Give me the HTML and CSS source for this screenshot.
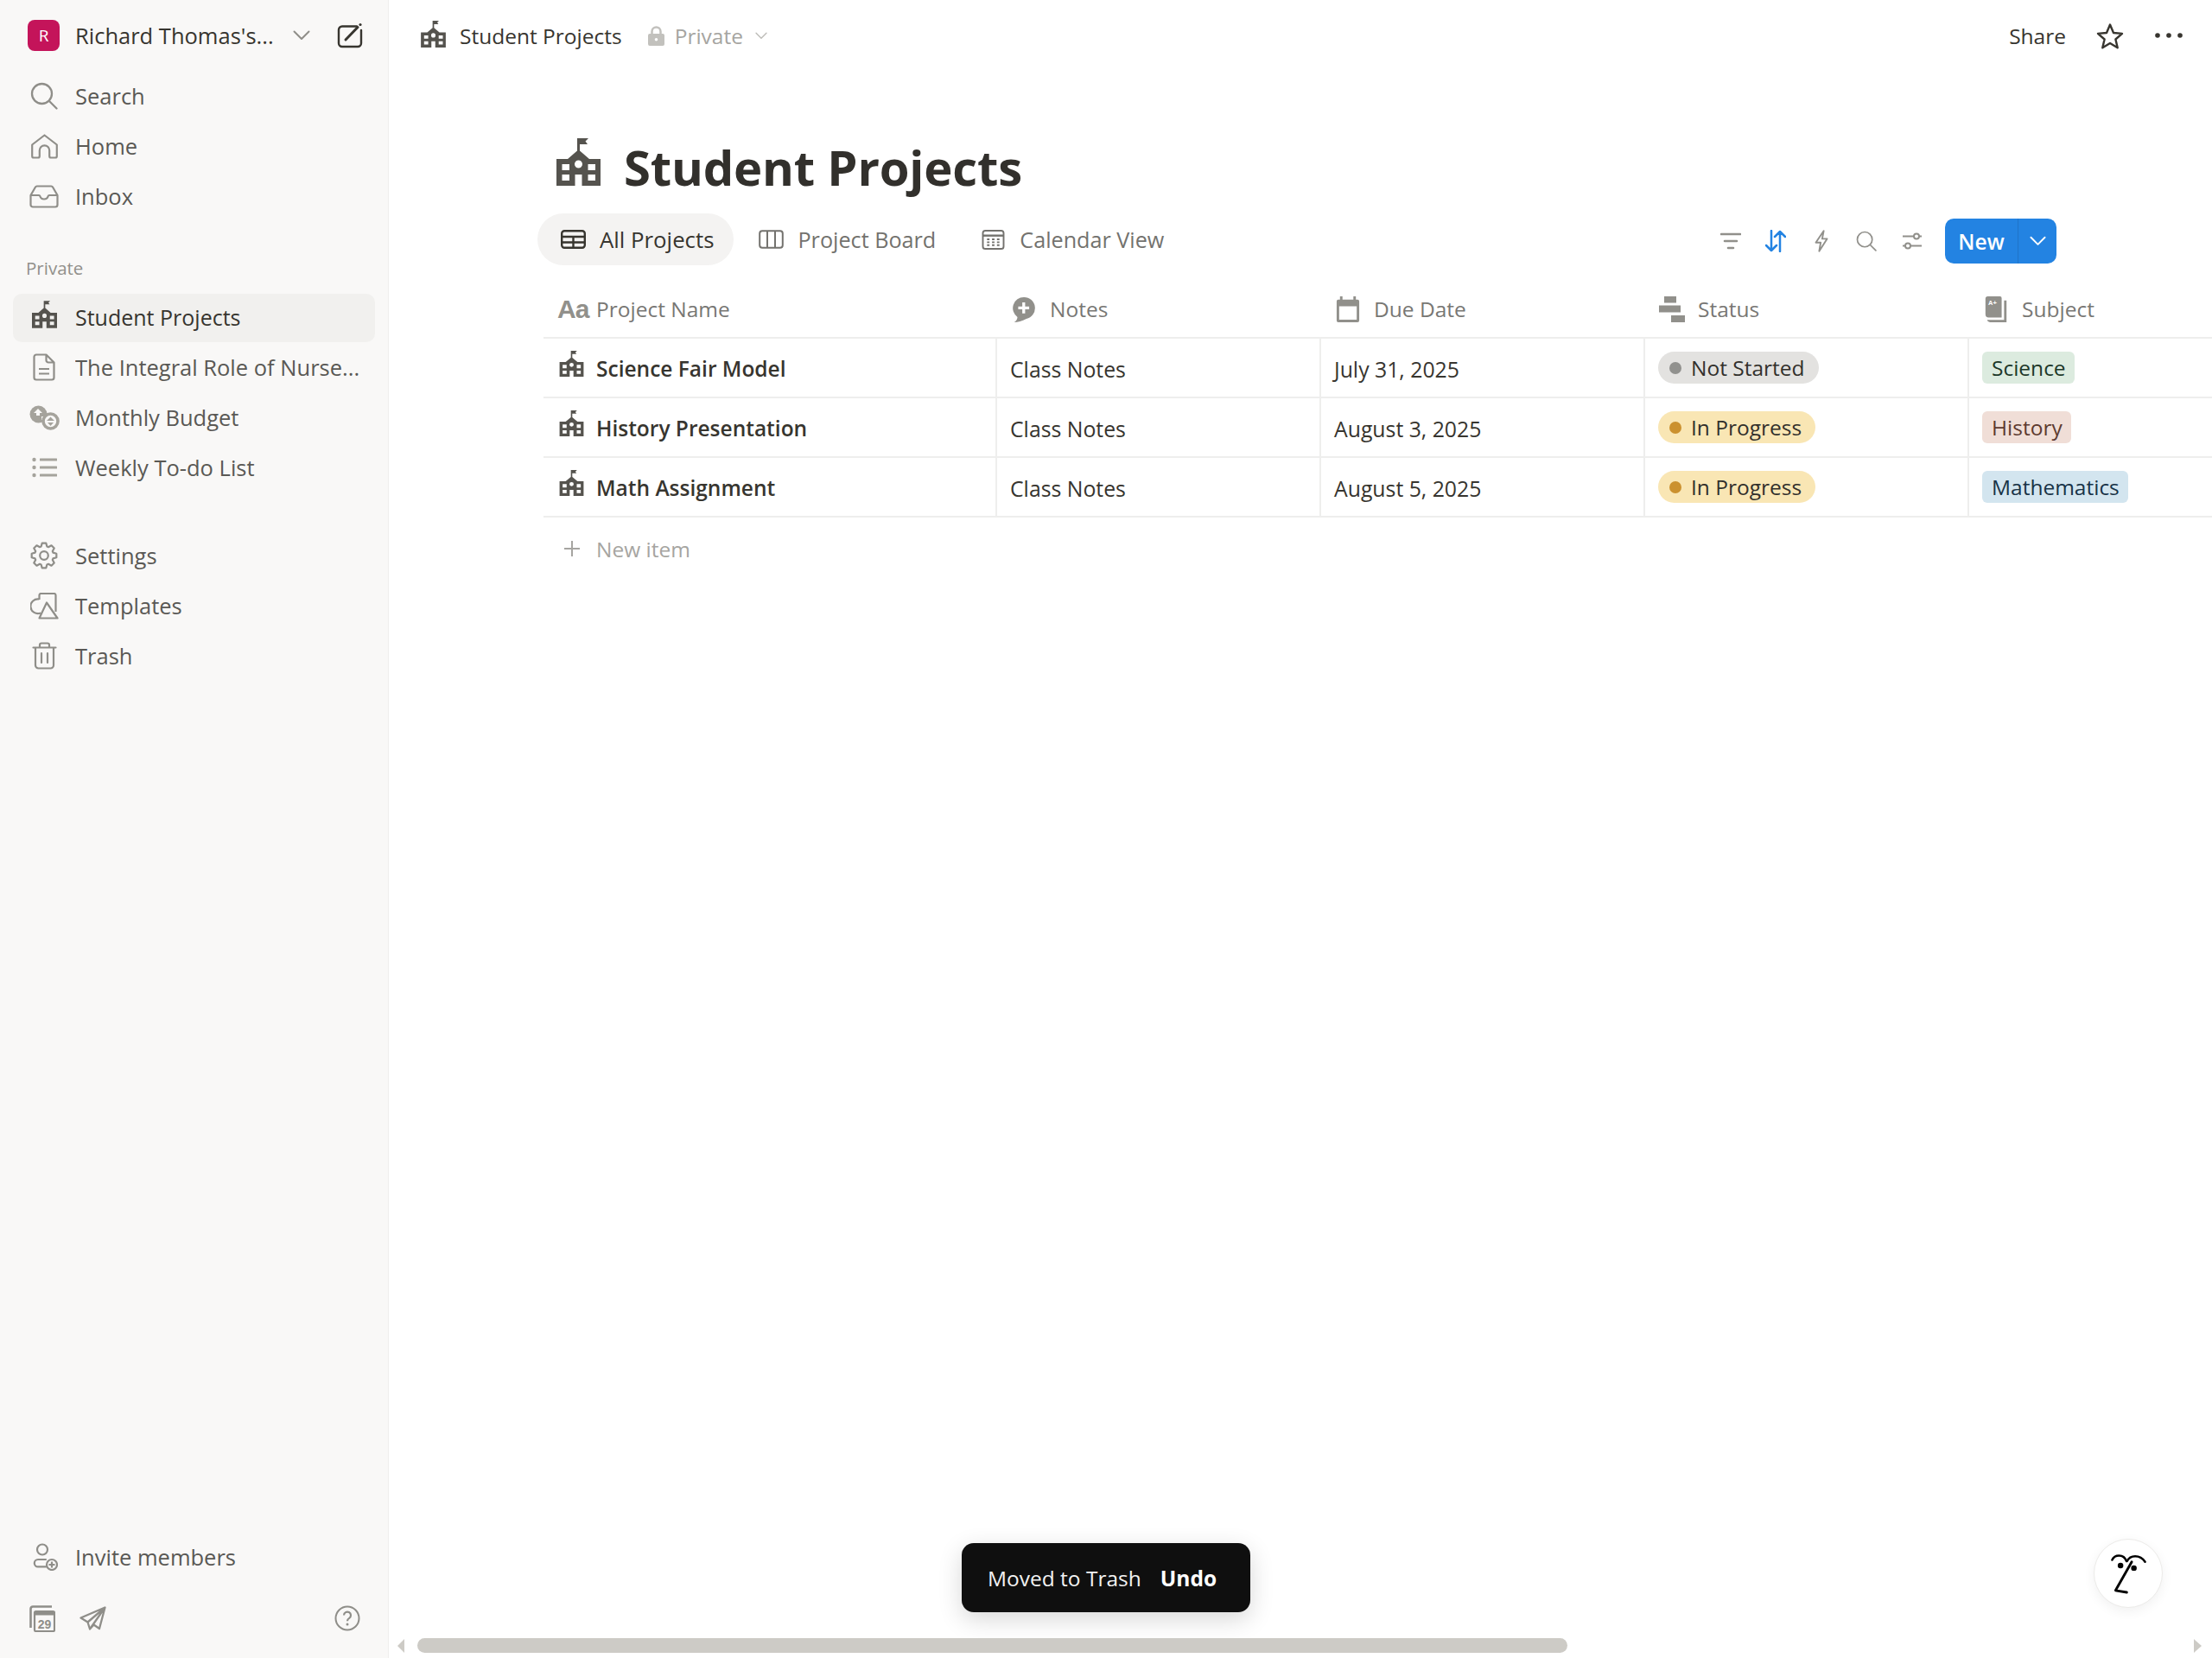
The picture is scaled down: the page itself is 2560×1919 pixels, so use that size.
FILE: index.html
```html
<!DOCTYPE html>
<html lang="en">
<head>
<meta charset="utf-8">
<title>Student Projects</title>
<link rel="stylesheet" href="styles.css">
</head>
<body>
<svg class="defs" aria-hidden="true">
  <symbol id="school" viewBox="0 0 51 55">
    <path fill="currentColor" fill-rule="evenodd" d="M24 0h13l-3.500 3.500L36 7H27v7.500L38 24h13v31H29.500V42H21.500V55H0V24h13L24 14.500zM6.500 30v7H15v-7zM6.500 42v7H15v-7zM36.500 30v7H45v-7zM36.500 42v7H45v-7zM25.500 25.500a4.500 4.500 0 1 0 0 9 4.500 4.500 0 0 0 0-9z"/>
  </symbol>
  <symbol id="search" viewBox="0 0 32 32">
    <circle cx="13.500" cy="13.500" r="11.500" fill="none" stroke="currentColor" stroke-width="2.300"/>
    <path d="M22 22l8.500 8.500" fill="none" stroke="currentColor" stroke-width="2.300" stroke-linecap="round"/>
  </symbol>
  <symbol id="chev" viewBox="0 0 20 12">
    <path d="M1.500 1.500L10 10l8.500-8.500" fill="none" stroke="currentColor" stroke-width="2" stroke-linecap="round" stroke-linejoin="round"/>
  </symbol>
</svg>
<div class="app">
  <aside class="sidebar">
    <div class="workspace">
      <span class="avatar">R</span>
      <span class="ws-name">Richard Thomas's...</span>
      <svg class="ws-chev"><use href="#chev"/></svg>
      <svg class="compose" viewBox="0 0 30 30"><path d="M23 4.500H6a4 4 0 0 0-4 4V24a4 4 0 0 0 4 4h18a4 4 0 0 0 4-4V9" fill="none" stroke="currentColor" stroke-width="2.400" stroke-linecap="round"/><path d="M10 20L24 5.500" stroke="currentColor" stroke-width="3" stroke-linecap="round"/><circle cx="27" cy="2.500" r="1.600" fill="currentColor"/></svg>
    </div>
    <nav class="group">
      <a class="item"><span class="ibox"><svg class="i31"><use href="#search"/></svg></span>Search</a>
      <a class="item"><span class="ibox"><svg class="ihome" viewBox="0 0 31 29"><path d="M3 27.500a1.800 1.800 0 0 1-1.800-1.800V12.500L15.500 1.500 29.800 12.500v13.200a1.800 1.800 0 0 1-1.800 1.800h-5a1.800 1.800 0 0 1-1.800-1.800V19a5.700 5.700 0 0 0-11.400 0v6.700A1.800 1.800 0 0 1 8 27.500z" fill="none" stroke="currentColor" stroke-width="2.200" stroke-linejoin="round"/></svg></span>Home</a>
      <a class="item"><span class="ibox"><svg class="iinbox" viewBox="0 0 34 27"><path d="M1.500 12L7 2.500a2 2 0 0 1 1.700-1h16.600a2 2 0 0 1 1.700 1L32.500 12v11a2.500 2.500 0 0 1-2.500 2.500H4A2.500 2.500 0 0 1 1.500 23zM1.500 12H11q1 0 1.300 1 1 3.500 4.700 3.500t4.700-3.500q.3-1 1.300-1h9.500" fill="none" stroke="currentColor" stroke-width="2.200" stroke-linejoin="round"/></svg></span>Inbox</a>
    </nav>
    <div class="section-label">Private</div>
    <nav class="group">
      <a class="item active"><span class="ibox"><svg class="school-side"><use href="#school"/></svg></span>Student Projects</a>
      <a class="item"><span class="ibox"><svg class="idoc" viewBox="0 0 26 32"><path d="M15.500 1.500H4A2.500 2.500 0 0 0 1.500 4v24A2.500 2.500 0 0 0 4 30.500h18a2.500 2.500 0 0 0 2.500-2.500V10.500zM15.500 1.500V8a2.500 2.500 0 0 0 2.500 2.500h6.500M7 18h12M7 23.500h12" fill="none" stroke="currentColor" stroke-width="2.200" stroke-linejoin="round"/></svg></span><span class="ellip">The Integral Role of Nurse...</span></a>
      <a class="item"><span class="ibox"><svg class="icoins" viewBox="0 0 35 29"><circle cx="10.500" cy="10.500" r="10" fill="currentColor"/><path d="M10 4l5 5h-3v3H8V9H5zM17 13h-3v4h3z" fill="#f9f8f7"/><circle cx="24.500" cy="18.500" r="8.500" fill="#f9f8f7" stroke="currentColor" stroke-width="3.600"/><path d="M24.500 13.500l4.500 4.500h-9zM24.500 24l-3.500-4h7z" fill="currentColor"/></svg></span>Monthly Budget</a>
      <a class="item"><span class="ibox"><svg class="ilist" viewBox="0 0 29 24"><g fill="currentColor"><circle cx="2.500" cy="3" r="2.200"/><circle cx="2.500" cy="12" r="2.200"/><circle cx="2.500" cy="21" r="2.200"/><rect x="9" y="1.500" width="20" height="3" rx=".5"/><rect x="9" y="10.500" width="20" height="3" rx=".5"/><rect x="9" y="19.500" width="20" height="3" rx=".5"/></g></svg></span>Weekly To-do List</a>
    </nav>
    <nav class="group group-settings">
      <a class="item"><span class="ibox"><svg class="i31" viewBox="0 0 32 32"><circle cx="16" cy="16" r="4.800" fill="none" stroke="currentColor" stroke-width="2.200"/><path d="M12.600 5.540L13.730 1.680H18.270L19.400 5.540L20.990 6.200L24.520 4.270L27.730 7.480L25.800 11.010L26.460 12.600L30.320 13.730V18.270L26.460 19.400L25.800 20.990L27.730 24.520L24.520 27.730L20.990 25.800L19.400 26.460L18.270 30.320H13.730L12.600 26.460L11.010 25.800L7.480 27.730L4.270 24.520L6.200 20.990L5.540 19.400L1.680 18.270V13.730L5.540 12.600L6.200 11.010L4.270 7.480L7.480 4.270L11.010 6.200z" fill="none" stroke="currentColor" stroke-width="2.200" stroke-linejoin="round"/></svg></span>Settings</a>
      <a class="item"><span class="ibox"><svg class="itempl" viewBox="0 0 33 31"><path d="M10.500 8V3a2 2 0 0 1 2-2h15a2 2 0 0 1 2 2v19" fill="none" stroke="currentColor" stroke-width="2.200"/><path d="M10.500 7.500A8.400 8.400 0 1 0 12 23.500" fill="none" stroke="currentColor" stroke-width="2.200"/><path d="M19 11.500L31.500 29.500H10.500z" fill="none" stroke="currentColor" stroke-width="2.200" stroke-linejoin="round"/></svg></span>Templates</a>
      <a class="item"><span class="ibox"><svg class="itrash" viewBox="0 0 29 32"><path d="M1.500 6.500h26M9 6V3.500a2 2 0 0 1 2-2h7a2 2 0 0 1 2 2V6M4 6.500V27a3.500 3.500 0 0 0 3.500 3.500h14A3.500 3.500 0 0 0 25 27V6.500M11 13v11M18 13v11" fill="none" stroke="currentColor" stroke-width="2.200" stroke-linecap="round"/></svg></span>Trash</a>
    </nav>
    <div class="side-bottom">
      <a class="item"><span class="ibox"><svg class="iinvite" viewBox="0 0 31 32"><circle cx="13" cy="7.500" r="6" fill="none" stroke="currentColor" stroke-width="2.200"/><path d="M17 19H8a4.200 4.200 0 0 0 0 8.400h9" fill="none" stroke="currentColor" stroke-width="2.200" stroke-linecap="round"/><circle cx="24" cy="25" r="6" fill="none" stroke="currentColor" stroke-width="2.200"/><path d="M24 21.500v7M20.500 25h7" stroke="currentColor" stroke-width="2.200"/></svg></span>Invite members</a>
      <div class="tools">
        <svg class="icalstack" viewBox="0 0 30 31"><path d="M1.500 26V4a2.500 2.500 0 0 1 2.500-2.500h22" fill="none" stroke="currentColor" stroke-width="2.600"/><rect x="6" y="7" width="23" height="23" rx="1.500" fill="none" stroke="currentColor" stroke-width="2.200"/><rect x="6" y="7" width="23" height="4.500" fill="currentColor"/><text class="cal-num" x="17.500" y="26.500">29</text></svg>
        <svg class="iplane" viewBox="0 0 31 28"><path d="M29.500 1.500L1.500 13.500l8 5 2.500 8 4.500-5 6.500 4.500zM29.500 1.500L9.500 18.500M29.500 1.500L12 26.500" fill="none" stroke="currentColor" stroke-width="2.300" stroke-linejoin="round"/></svg>
        <svg class="ihelp" viewBox="0 0 30 30"><circle cx="15" cy="15" r="13.500" fill="none" stroke="currentColor" stroke-width="2"/><path d="M11 11.500a4 4 0 1 1 6.200 3.400c-1.500.9-2.200 1.800-2.200 3.300" fill="none" stroke="currentColor" stroke-width="2.200"/><circle cx="15" cy="22" r="1.500" fill="currentColor"/></svg>
      </div>
    </div>
  </aside>

  <main class="main">
    <header class="topbar">
      <div class="crumb">
        <svg class="school-crumb"><use href="#school"/></svg>
        <span class="crumb-title">Student Projects</span>
        <svg class="lock" viewBox="0 0 19 23"><path d="M4.500 10V6.500a5 5 0 0 1 10 0V10" fill="none" stroke="currentColor" stroke-width="2.500"/><path fill-rule="evenodd" fill="currentColor" d="M2 9h15a2 2 0 0 1 2 2v10a2 2 0 0 1-2 2H2a2 2 0 0 1-2-2V11a2 2 0 0 1 2-2zM9.500 14a1.800 1.800 0 1 0 0 3.600 1.800 1.800 0 0 0 0-3.600z"/></svg>
        <span class="crumb-private">Private</span>
        <svg class="crumb-chev"><use href="#chev"/></svg>
      </div>
      <div class="top-actions">
        <span class="share">Share</span>
        <svg class="star" viewBox="0 0 32 31"><path d="M16 2.500l4 9.500 10 .9-7.600 6.600 2.300 9.800L16 23.900l-8.700 5.400 2.300-9.800L2 12.900l10-.9z" fill="none" stroke="currentColor" stroke-width="2.400" stroke-linejoin="round"/></svg>
        <svg class="dots" viewBox="0 0 32 6"><circle cx="3" cy="3" r="2.800" fill="currentColor"/><circle cx="16" cy="3" r="2.800" fill="currentColor"/><circle cx="29" cy="3" r="2.800" fill="currentColor"/></svg>
      </div>
    </header>

    <section class="content">
      <div class="title-row">
        <svg class="school-title"><use href="#school"/></svg>
        <h1 class="title">Student Projects</h1>
      </div>
      <div class="view-row">
        <div class="tabs">
          <a class="tab tab-on"><svg class="tab-ic" viewBox="0 0 29 22"><rect x="1.200" y="1.200" width="26.600" height="19.600" rx="3" fill="none" stroke="currentColor" stroke-width="2.400"/><path d="M1 8h27M1 14.500h27M14.500 8v13" stroke="currentColor" stroke-width="2.400"/></svg>All Projects</a>
          <a class="tab"><svg class="tab-ic" viewBox="0 0 29 22"><rect x="1.200" y="1.200" width="26.600" height="19.600" rx="3" fill="none" stroke="currentColor" stroke-width="2"/><path d="M10 1v20M19 1v20" stroke="currentColor" stroke-width="2"/></svg>Project Board</a>
          <a class="tab"><svg class="tab-ic" viewBox="0 0 27 25"><rect x="1" y="2" width="25" height="22" rx="3" fill="none" stroke="currentColor" stroke-width="2"/><path d="M1 8h25" stroke="currentColor" stroke-width="2.500"/><path d="M6 12.500h15M6 16h15M6 19.500h15" stroke="currentColor" stroke-width="2" stroke-dasharray="3 3"/></svg>Calendar View</a>
        </div>
        <div class="toolbar">
          <span class="tool"><svg class="t24" viewBox="0 0 24 22"><path d="M1 3h22M5 11h14M9 19h6" stroke="currentColor" stroke-width="2.600" stroke-linecap="round"/></svg></span>
          <span class="tool tool-blue"><svg class="t24" viewBox="0 0 24 26"><path d="M7 1v23M1 18l6 6 6-6M17 25V2M11 8l6-6 6 6" fill="none" stroke="currentColor" stroke-width="2.500" stroke-linecap="round" stroke-linejoin="round"/></svg></span>
          <span class="tool"><svg class="t24" viewBox="0 0 18 30"><path d="M12 1.500L1.500 17H8l-2 11.500L16.500 12H10z" fill="none" stroke="currentColor" stroke-width="2.200" stroke-linejoin="round"/></svg></span>
          <span class="tool"><svg class="t24"><use href="#search"/></svg></span>
          <span class="tool"><svg class="t24" viewBox="0 0 24 22"><path d="M1 5.500h13M20 5.500h3M1 16.500h3M10 16.500h13" stroke="currentColor" stroke-width="2"/><circle cx="17" cy="5.500" r="3" fill="none" stroke="currentColor" stroke-width="2"/><circle cx="7" cy="16.500" r="3" fill="none" stroke="currentColor" stroke-width="2"/></svg></span>
          <div class="new-btn"><span class="new-label">New</span><span class="new-arrow"><svg class="new-chev"><use href="#chev"/></svg></span></div>
        </div>
      </div>

      <div class="table">
        <div class="cell head"><span class="th-aa">Aa</span>Project Name</div>
        <div class="cell head"><svg class="th-ic" viewBox="0 0 28 32"><path fill="currentColor" fill-rule="evenodd" d="M14 1a13.500 13.500 0 0 1 3 26.700Q9 32 2 32q4-3 4-6.500A13.500 13.500 0 0 1 14 1zM12 7.500v5h-5v3.500h5v5h3.500v-5h5v-3.500h-5v-5z"/></svg>Notes</div>
        <div class="cell head"><svg class="th-ic" viewBox="0 0 27 31"><path fill="currentColor" fill-rule="evenodd" d="M4 0h3v4h13V0h3v4h2a2 2 0 0 1 2 2v23a2 2 0 0 1-2 2H2a2 2 0 0 1-2-2V6a2 2 0 0 1 2-2h2zM3 12v16h21V12z"/></svg>Due Date</div>
        <div class="cell head"><svg class="th-ic" viewBox="0 0 30 30"><g fill="currentColor"><rect x="6" y="0" width="14" height="7.500"/><rect x="0" y="10.500" width="25" height="8"/><rect x="14" y="22" width="16" height="8"/></g></svg>Status</div>
        <div class="cell head"><svg class="th-ic" viewBox="0 0 26 32"><path fill="currentColor" d="M3 0h15a2 2 0 0 1 2 2v24H4a4 4 0 0 1-4-4V3a3 3 0 0 1 3-3z"/><path fill="currentColor" d="M23 5h3v27H6a4 4 0 0 1-4-3h21z"/><text class="aplus" x="3.500" y="11">A+</text></svg>Subject</div>

        <div class="cell name"><svg class="school-row"><use href="#school"/></svg>Science Fair Model</div>
        <div class="cell text">Class Notes</div>
        <div class="cell text">July 31, 2025</div>
        <div class="cell tag-cell"><span class="pill pill-grey"><i class="dot dot-grey"></i>Not Started</span></div>
        <div class="cell tag-cell"><span class="tag tag-green">Science</span></div>

        <div class="cell name"><svg class="school-row"><use href="#school"/></svg>History Presentation</div>
        <div class="cell text">Class Notes</div>
        <div class="cell text">August 3, 2025</div>
        <div class="cell tag-cell"><span class="pill pill-yellow"><i class="dot dot-yellow"></i>In Progress</span></div>
        <div class="cell tag-cell"><span class="tag tag-red">History</span></div>

        <div class="cell name"><svg class="school-row"><use href="#school"/></svg>Math Assignment</div>
        <div class="cell text">Class Notes</div>
        <div class="cell text">August 5, 2025</div>
        <div class="cell tag-cell"><span class="pill pill-yellow"><i class="dot dot-yellow"></i>In Progress</span></div>
        <div class="cell tag-cell"><span class="tag tag-blue">Mathematics</span></div>
      </div>

      <div class="new-item"><svg class="plus" viewBox="0 0 20 20"><path d="M10 1v18M1 10h18" stroke="currentColor" stroke-width="2"/></svg>New item</div>
    </section>

    <div class="toast"><span>Moved to Trash</span><b class="undo">Undo</b></div>
    <div class="face"><svg class="face-svg" viewBox="250 170 130 150"><path d="M262 202q6-14 22-14 18 0 24 18M310 206q8-16 26-16 20 0 32 18" fill="none" stroke="#000" stroke-width="7" stroke-linecap="round"/><path d="M325 208l-52 92 36 6" fill="none" stroke="#000" stroke-width="8" stroke-linecap="round" stroke-linejoin="round"/><circle cx="289" cy="220" r="9"/><circle cx="332" cy="228" r="9"/></svg></div>
    <div class="scroll-arrow scroll-left"></div>
    <div class="scroll-thumb"></div>
    <div class="scroll-arrow scroll-right"></div>
  </main>
</div>
</body>
</html>
```
FILE: styles.css
```css
* { box-sizing: border-box; }
html, body { margin: 0; height: 100%; }
body {
  font-family: "Open Sans", "Noto Sans", sans-serif;
  font-size: 24.5px;
  color: #37352f;
  background: #fff;
  overflow: hidden;
}
.defs { position: absolute; width: 0; height: 0; }
.app { display: flex; height: 1919px; }

/* Sidebar */
.sidebar {
  width: 450px;
  flex: none;
  display: flex;
  flex-direction: column;
  background: #f9f8f7;
  border-right: 1px solid #f0efed;
  color: #5a5955;
  font-size: 25.5px;
  font-weight: 500;
}
.workspace {
  height: 83px;
  display: flex;
  align-items: center;
  padding-left: 32px;
  padding-bottom: 1px;
  color: #37352f;
}
.avatar {
  width: 37px;
  height: 36px;
  border-radius: 8px;
  background: #c4145a;
  color: #fff;
  font-size: 19px;
  font-weight: 400;
  display: flex;
  align-items: center;
  justify-content: center;
  margin-right: 18px;
}
.ws-name { width: 252px; white-space: nowrap; }
.ws-chev { width: 20px; height: 12px; color: #8f8e89; margin-right: 31px; }
.compose { width: 30px; height: 30px; color: #37352f; }
.group { display: flex; flex-direction: column; }
.group-settings { margin-top: 44px; }
.item {
  height: 56px;
  margin: 1px 15px;
  padding: 0 0 2px 16px;
  display: flex;
  align-items: center;
  border-radius: 10px;
  white-space: nowrap;
}
.item.active { background: #f1f0ee; color: #37352f; font-size: 25px; }
.ibox {
  width: 40px;
  margin-right: 16px;
  flex: none;
  display: flex;
  justify-content: center;
  color: #8f8e89;
}
.item.active .ibox { color: #55534e; }
.ellip { overflow: hidden; }
.i31 { width: 32px; height: 32px; }
.ihome { width: 31px; height: 29px; }
.iinbox { width: 34px; height: 27px; }
.school-side { width: 29px; height: 34px; margin-top: -6px; }
.idoc { width: 26px; height: 32px; }
.icoins { width: 35px; height: 29px; color: #a5a39c; }
.ilist { width: 29px; height: 24px; color: #a5a39c; }
.itempl { width: 33px; height: 31px; }
.itrash { width: 29px; height: 32px; }
.iinvite { width: 31px; height: 32px; }
.section-label {
  height: 82px;
  padding: 39px 0 0 30px;
  font-size: 20.500px;
  font-weight: 500;
  color: #91908b;
  line-height: 28px;
}
.side-bottom {
  margin-top: auto;
  padding-bottom: 17px;
}
.tools {
  height: 58px;
  margin-top: 13px;
  padding: 0 32px 0 34px;
  display: flex;
  align-items: center;
  color: #8f8e89;
}
.icalstack { width: 30px; height: 31px; }
.cal-num { font-size: 14px; font-weight: 700; text-anchor: middle; fill: currentColor; font-family: "Liberation Sans", sans-serif; }
.iplane { width: 31px; height: 28px; margin-left: 28px; }
.ihelp { width: 30px; height: 30px; margin-left: auto; }

/* Main */
.main { flex: 1; position: relative; min-width: 0; display: flex; flex-direction: column; }
.topbar {
  height: 82px;
  flex: none;
  display: flex;
  align-items: center;
  justify-content: space-between;
  padding: 0 34px 0 37px;
}
.crumb { display: flex; align-items: center; }
.school-crumb { width: 29px; height: 31px; color: #55534e; margin-right: 16px; margin-top: -4px; }
.crumb-title { margin-right: 30px; }
.lock { width: 19px; height: 23px; color: #c2c1bd; margin-right: 12px; }
.crumb-private { color: #a6a5a1; margin-right: 14px; }
.crumb-chev { width: 14px; height: 9px; color: #bdbcb8; }
.top-actions { display: flex; align-items: center; }
.share { margin-right: 35px; }
.star { width: 32px; height: 31px; color: #37352f; margin-right: 36px; }
.dots { width: 32px; height: 6px; color: #37352f; }

.content { padding-left: 172px; }
.title-row {
  height: 103px;
  padding: 0 0 3px 22px;
  margin-top: 62px;
  display: flex;
  align-items: center;
}
.school-title { width: 51px; height: 55px; color: #55534e; margin-right: 27px; margin-top: -13px; }
.title { margin: 0; font-size: 56.200px; font-weight: 700; color: #32302c; line-height: 1.2; white-space: nowrap; letter-spacing: -.2px; }

.view-row { height: 60px; display: flex; align-items: center; justify-content: space-between; padding-right: 180px; }
.tabs { display: flex; gap: 2px; }
.tab {
  height: 60px;
  padding: 0 23px 0 27px;
  border-radius: 30px;
  display: flex;
  align-items: center;
  color: #73726e;
  font-size: 25.200px;
  font-weight: 500;
  white-space: nowrap;
}
.tab-on { background: #f4f3f2; color: #37352f; font-size: 25.800px; }
.tab-ic { width: 29px; height: 24px; margin-right: 16px; }
.toolbar { display: flex; align-items: center; margin-top: 4px; color: #91908b; }
.tool { width: 52.500px; display: flex; justify-content: center; }
.tool-blue { color: #2383e2; }
.t24 { width: 24px; height: 26px; }
.new-btn {
  height: 52px;
  width: 129px;
  margin-left: 12px;
  border-radius: 10px;
  background: #2383e2;
  color: #fff;
  font-weight: 600;
  display: flex;
}
.new-label { width: 85px; display: flex; align-items: center; justify-content: center; border-right: 1px solid #1f74c9; }
.new-arrow { flex: 1; display: flex; align-items: center; justify-content: center; }
.new-chev { width: 19px; height: 12px; }

.table {
  margin: 18px 0 0 7px;
  display: grid;
  grid-template-columns: 525px 375px 375px 375px 1fr;
  grid-auto-rows: 69px;
  grid-template-rows: 67px;
}
.cell {
  display: flex;
  align-items: center;
  border-bottom: 2px solid #eeeeed;
  border-right: 2px solid #eeeeed;
  white-space: nowrap;
  min-width: 0;
}
.cell:nth-child(5n) { border-right: 0; }
.head { border-right: 0; padding-left: 16px; color: #787774; }
.th-ic { width: 30px; height: 30px; margin-right: 15px; color: #91908b; flex: none; }
.th-aa {
  width: 45px;
  flex: none;
  font: 700 30px/1 "Liberation Sans", sans-serif;
  letter-spacing: -1px;
  color: #91908b;
}
.aplus { font: 700 8px "Liberation Sans", sans-serif; fill: #fff; }
.name { padding: 2px 0 0 18px; font-weight: 600; color: #37352f; font-size: 24.500px; }
.school-row { width: 29px; height: 30px; color: #55534e; margin: -12px 14px 0 0; flex: none; }
.text { padding: 3px 0 0 15px; color: #37352f; font-size: 24.800px; }
.tag-cell { padding-left: 15px; }
.pill, .tag {
  height: 37px;
  display: inline-flex;
  align-items: center;
  font-size: 24.500px;
  white-space: nowrap;
}
.pill { border-radius: 19px; padding: 0 16px 0 13px; color: #32302c; }
.dot { width: 14px; height: 14px; border-radius: 50%; margin-right: 11px; flex: none; }
.pill-grey { background: #e3e2e0; }
.dot-grey { background: #91918e; }
.pill-yellow { background: #f9e6b4; }
.dot-yellow { background: #cb912f; }
.tag { border-radius: 6px; padding: 0 10px 0 11px; }
.tag-green { background: #dcebdf; color: #1c3829; }
.tag-red { background: #f0ded7; color: #5d3a30; }
.tag-blue { background: #d3e5ef; color: #183347; }
.new-item {
  margin-left: 7px;
  height: 72px;
  padding-left: 23px;
  display: flex;
  align-items: center;
  color: #a6a5a1;
}
.plus { width: 20px; height: 20px; margin-right: 18px; }

/* Overlays */
.toast {
  position: absolute;
  left: 663px;
  top: 1786px;
  width: 334px;
  height: 80px;
  border-radius: 14px;
  background: #0f0f0f;
  color: #f2f2f2;
  display: flex;
  align-items: center;
  padding-left: 30px;
  gap: 22px;
  box-shadow: 0 8px 28px rgba(0, 0, 0, .16);
}
.undo { font-weight: 700; color: #fff; }
.face {
  position: absolute;
  left: 1973px;
  top: 1781px;
  width: 80px;
  height: 80px;
  border-radius: 50%;
  background: #fff;
  border: 1px solid #ecebe9;
  box-shadow: 0 4px 14px rgba(0, 0, 0, .06);
  display: flex;
  align-items: center;
  justify-content: center;
}
.face-svg { width: 47px; height: 54px; }
.scroll-thumb {
  position: absolute;
  left: 33px;
  top: 1896px;
  width: 1331px;
  height: 17px;
  border-radius: 9px;
  background: #cdcbc6;
}
.scroll-arrow {
  position: absolute;
  top: 1897px;
  width: 0;
  height: 0;
  border-top: 8px solid transparent;
  border-bottom: 8px solid transparent;
}
.scroll-left { left: 10px; border-right: 8px solid #cdcbc6; }
.scroll-right { left: 2089px; border-left: 9px solid #cdcbc6; }
```
